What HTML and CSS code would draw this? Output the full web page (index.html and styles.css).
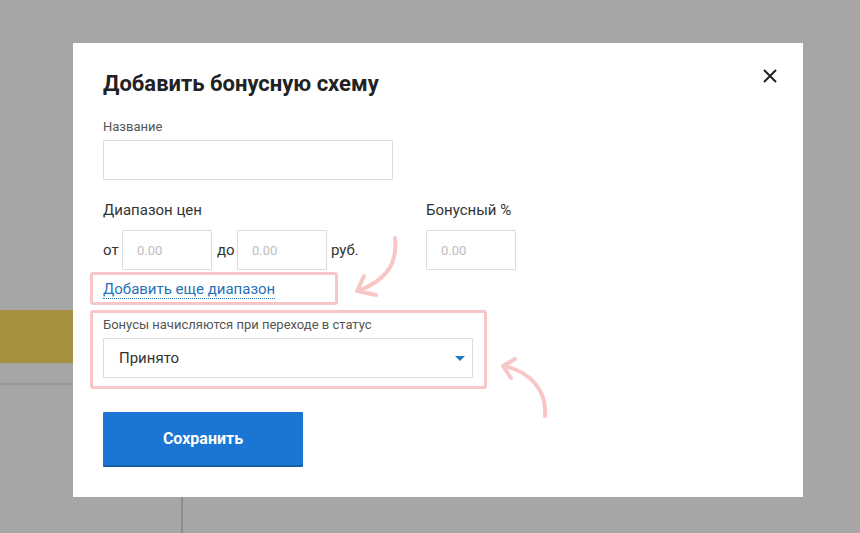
FILE: index.html
```html
<!DOCTYPE html>
<html lang="ru">
<head>
<meta charset="utf-8">
<title>Добавить бонусную схему</title>
<link rel="stylesheet" href="styles.css">
</head>
<body>
<div class="bg">
  <div class="bg-bar"></div>
  <div class="bg-line"></div>
  <div class="bg-col"></div>
</div>

<div class="modal">
  <button class="close" aria-label="Закрыть">
    <svg width="14" height="14" viewBox="0 0 14 14"><path d="M1 1 L13 13 M13 1 L1 13" stroke="#222" stroke-width="2" fill="none"/></svg>
  </button>
  <h1 class="title">Добавить бонусную схему</h1>

  <div class="field">
    <label class="label-sm">Название</label>
    <input class="input name" type="text">
  </div>

  <div class="ranges">
    <div class="range-col">
      <div class="label-md">Диапазон цен</div>
      <div class="range-row">
        <span class="word w-ot">от</span>
        <input class="input num" placeholder="0.00">
        <span class="word w-do">до</span>
        <input class="input num" placeholder="0.00">
        <span class="word w-rub">руб.</span>
      </div>
    </div>
    <div class="bonus-col">
      <div class="label-md">Бонусный %</div>
      <div class="range-row">
        <input class="input num" placeholder="0.00">
      </div>
    </div>
  </div>

  <div class="hl hl-link">
    <a class="add-link" href="#">Добавить еще диапазон</a>
  </div>

  <div class="hl hl-status">
    <label class="label-sm">Бонусы начисляются при переходе в статус</label>
    <div class="select">
      <span>Принято</span>
      <span class="caret"></span>
    </div>
  </div>

  <button class="save">Сохранить</button>

  <svg class="arrow arrow-1" width="860" height="533" viewBox="0 0 860 533">
    <path d="M395 238 C 398 266, 384 281, 358 291" />
    <path d="M364 276 L357 291 L376 295" />
  </svg>
  <svg class="arrow arrow-2" width="860" height="533" viewBox="0 0 860 533">
    <path d="M545 416 C 547 392, 532 372, 504 366" />
    <path d="M515 359 L503 366 L511 378" />
  </svg>
</div>
</body>
</html>
```

FILE: styles.css
```css
* { box-sizing: border-box; }
html, body {
  margin: 0;
  padding: 0;
  width: 860px;
  height: 533px;
  overflow: hidden;
  background: #a6a6a6;
  font-family: Roboto, "Liberation Sans", Arial, sans-serif;
}
.bg {
  display: flex;
  flex-direction: column;
  padding-top: 310px;
  height: 533px;
}
.bg-bar {
  width: 120px;
  height: 53px;
  background: #a78f40;
}
.bg-line {
  width: 120px;
  margin-top: 20px;
  height: 2px;
  background: #979797;
}
.bg-col {
  flex: 1;
  margin-left: 181px;
  border-left: 2px solid #8e8e8e;
}

.modal {
  position: fixed;
  left: 73px;
  top: 43px;
  width: 730px;
  height: 454px;
  background: #fff;
  padding: 28px 30px 0 30px;
}
.close {
  position: absolute;
  right: 26px;
  top: 26px;
  width: 14px;
  height: 14px;
  padding: 0;
  border: 0;
  background: none;
  display: flex;
}
.title {
  margin: 0;
  font-size: 22px;
  line-height: 26px;
  font-weight: 700;
  color: #222;
}
.field {
  margin-top: 22px;
  display: flex;
  flex-direction: column;
  gap: 5px;
}
.label-sm {
  font-size: 13px;
  line-height: 16px;
  color: #555;
}
.label-md {
  font-size: 15px;
  line-height: 18px;
  color: #333;
}
.input {
  height: 40px;
  border: 1px solid #dcdcdc;
  border-radius: 1px;
  background: #fff;
  font-family: inherit;
  font-size: 13px;
  color: #333;
  padding: 0 14px;
  outline: none;
}
.input::placeholder { color: #bdbdbd; }
.name { width: 290px; }
.ranges {
  margin-top: 21px;
  display: flex;
}
.range-col { width: 323px; }
.range-col, .bonus-col {
  display: flex;
  flex-direction: column;
  gap: 11px;
}
.range-row {
  display: flex;
  align-items: center;
}
.num { width: 90px; }
.word {
  font-size: 15px;
  color: #333;
}
.w-ot { width: 19px; }
.w-do { width: 25px; padding-left: 5px; }
.w-rub { padding-left: 4px; }

.hl {
  margin-left: -13px;
  border: 3px solid #f8c6c6;
  border-radius: 3px;
}
.hl-link {
  margin-top: 2px;
  width: 248px;
  padding: 4px 10px 5px;
  height: 33px;
}
.add-link {
  font-size: 15px;
  color: #2473b8;
  text-decoration: none;
  border-bottom: 1px dotted #2473b8;
  display: inline-block;
  line-height: 17px;
}
.hl-status {
  margin-top: 5px;
  width: 397px;
  padding: 4px 10px 8px;
  display: flex;
  flex-direction: column;
  gap: 5px;
}
.select {
  width: 370px;
  height: 40px;
  border: 1px solid #dcdcdc;
  border-radius: 1px;
  display: flex;
  align-items: center;
  justify-content: space-between;
  padding: 0 7px 0 15px;
  font-size: 15px;
  color: #333;
}
.caret {
  width: 0;
  height: 0;
  border-left: 5px solid transparent;
  border-right: 5px solid transparent;
  border-top: 5px solid #2577c0;
}
.save {
  margin-top: 23px;
  width: 200px;
  height: 55px;
  background: #1a76d2;
  border: 0;
  border-bottom: 2px solid #155ea8;
  border-radius: 1px;
  color: #fff;
  font-family: inherit;
  font-size: 16px;
  font-weight: 700;
  display: block;
}
.arrow {
  position: absolute;
  left: -73px;
  top: -43px;
  pointer-events: none;
  fill: none;
  stroke: #f9c6c6;
  stroke-width: 4;
  stroke-linecap: round;
  stroke-linejoin: round;
}
```
